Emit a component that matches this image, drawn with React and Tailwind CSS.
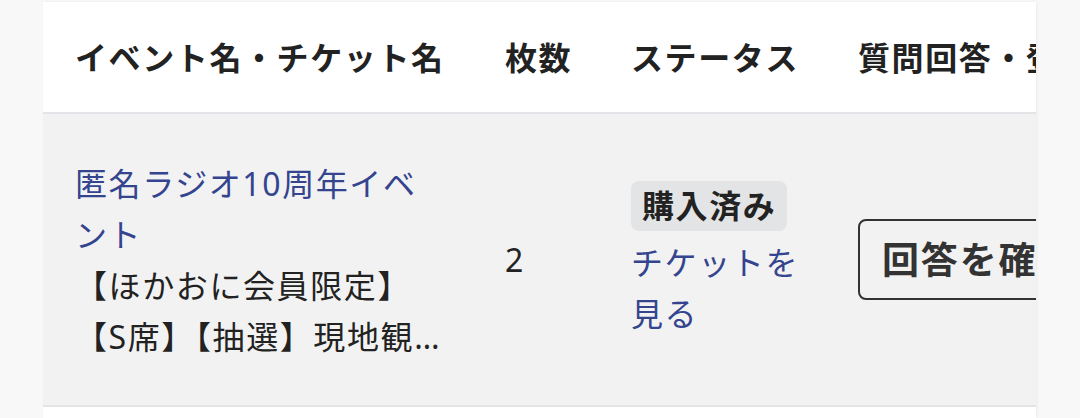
const headers = ['イベント名・チケット名', '枚数', 'ステータス', '質問回答・登録内容']

// padding per column, header and body share it
const cellPad = ['pl-[32px] pr-[30px]', 'pl-[32px] pr-[28px]', 'px-[30px]', 'pl-[27px] pr-[30px]']

const orders = [
  {
    id: 1,
    event: '匿名ラジオ10周年イベント',
    ticket: '【ほかおに会員限定】【S席】【抽選】現地観覧チケット',
    count: 2,
    status: '購入済み',
  },
]

const App = () => {
  return (
    <div
      className="h-[418px] overflow-hidden bg-[#f8f8f8] pt-[2px] text-[#222] tracking-[1.6px]"
      style={{ fontFamily: '"Noto Sans", "Noto Sans CJK JP", sans-serif' }}
    >
      <div className="ml-[43px] w-[993px] h-[416px] overflow-hidden bg-white shadow-[1px_0_3px_rgba(0,0,0,0.06)]">
        <table className="table-fixed w-[1320px] border-collapse text-left">
          <colgroup>
            <col className="w-[430px]" />
            <col className="w-[128px]" />
            <col className="w-[230px]" />
            <col className="w-[532px]" />
          </colgroup>
          <thead className="[text-spacing-trim:space-all]">
            <tr className="border-b-2 border-[#e2e4e7]">
              {headers.map((h, i) => (
                <th
                  key={h}
                  className={cellPad[i] + ' pt-[30px] pb-[29px] text-[32px] leading-[51px] font-bold whitespace-nowrap'}
                >
                  {h}
                </th>
              ))}
            </tr>
          </thead>
          <tbody>
            {orders.map((el) => (
              <tr key={el.id} className="bg-[#f2f2f2] border-b-2 border-[#e4e4e4]">
                <td className={cellPad[0] + ' pt-[44px] pb-[43px] align-middle text-[32px] leading-[51px]'}>
                  <a href="#" className="block text-[#34448f]">{el.event}</a>
                  <div className="line-clamp-2">{el.ticket}</div>
                </td>
                <td className={cellPad[1] + ' align-middle text-[32px] leading-[51px]'}>{el.count}</td>
                <td className={cellPad[2] + ' align-middle'}>
                  <span className="inline-block rounded-[8px] bg-[#e3e4e6] px-[11px] py-[1px] text-[32px] leading-[48px] font-bold">
                    {el.status}
                  </span>
                  <a href="#" className="block mt-[6px] text-[32px] leading-[51px] text-[#34448f]">チケットを見る</a>
                </td>
                <td className={cellPad[3] + ' align-middle'}>
                  <button className="rounded-[8px] border-2 border-[#333] px-[22px] py-[10px] text-[37px] leading-[57px] font-bold text-[#333] whitespace-nowrap tracking-[1.85px]">
                    回答を確認する
                  </button>
                </td>
              </tr>
            ))}
          </tbody>
        </table>
      </div>
    </div>
  )
}

export default App
